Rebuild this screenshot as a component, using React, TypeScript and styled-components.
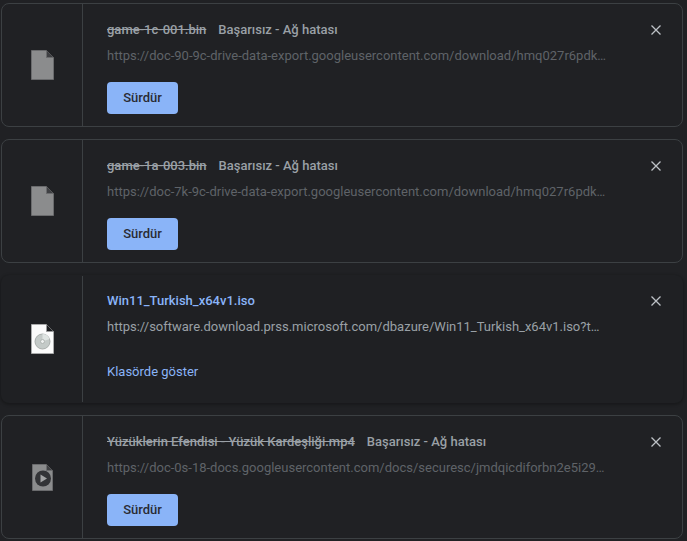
import { FC } from 'react'
import styled, { createGlobalStyle } from 'styled-components'

type IconKind = 'blank' | 'disc' | 'video'

type Download = {
  name: string
  url: string
  status?: string
  failed: boolean
  icon: IconKind
}

const downloads: Download[] = [
  {
    name: 'game-1c-001.bin',
    status: 'Başarısız - Ağ hatası',
    url: 'https://doc-90-9c-drive-data-export.googleusercontent.com/download/hmq027r6pdk9a1b3c5d7e9f0g2h4j6k8',
    failed: true,
    icon: 'blank',
  },
  {
    name: 'game-1a-003.bin',
    status: 'Başarısız - Ağ hatası',
    url: 'https://doc-7k-9c-drive-data-export.googleusercontent.com/download/hmq027r6pdk9a1b3c5d7e9f0g2h4j6k8',
    failed: true,
    icon: 'blank',
  },
  {
    name: 'Win11_Turkish_x64v1.iso',
    url: 'https://software.download.prss.microsoft.com/dbazure/Win11_Turkish_x64v1.iso?tm=a1b3c5d7e9f0g2h4j6k8',
    failed: false,
    icon: 'disc',
  },
  {
    name: 'Yüzüklerin Efendisi - Yüzük Kardeşliği.mp4',
    status: 'Başarısız - Ağ hatası',
    url: 'https://doc-0s-18-docs.googleusercontent.com/docs/securesc/jmdqicdiforbn2e5i29a1b3c5d7e9f0g2h4j6k8',
    failed: true,
    icon: 'video',
  },
]

const BlankIcon: FC = () => (
  <svg width="23" height="30" viewBox="0 0 23 30">
    <path d="M.5.500h15l7 7v22H.5z" fill="#8b8c8d" stroke="#6a6b6d" />
    <path d="M15.500.500v7h7z" fill="#3f4043" />
    <path d="M15.500 1v6.500H22" fill="none" stroke="#6a6b6d" />
  </svg>
)

const DiscIcon: FC = () => (
  <svg width="23" height="30" viewBox="0 0 23 30">
    <path d="M.5.500h15l7 7v22H.5z" fill="#fbfbfb" stroke="#a9aaab" />
    <path d="M15.500.500v7h7z" fill="#202124" />
    <path d="M15.500 1v6.500H22" fill="none" stroke="#9a9b9c" />
    <circle cx="11.500" cy="17.500" r="7.500" fill="#c4cac8" stroke="#a9aeac" />
    <path d="M11.500 10a7.500 7.500 0 0 1 7 5l-7 2.500z" fill="#dfe4e2" />
    <circle cx="11.500" cy="17.500" r="2" fill="#eef0f0" stroke="#b0b5b3" />
  </svg>
)

const VideoIcon: FC = () => (
  <svg width="21" height="27" viewBox="0 0 21 27">
    <path d="M.5.500h14l6 6v20H.5z" fill="#8b8c8d" stroke="#6a6b6d" />
    <path d="M14.500.500v6h6z" fill="#3f4043" />
    <path d="M14.500 1v5.500H20" fill="none" stroke="#6a6b6d" />
    <circle cx="11" cy="14.500" r="8" fill="#333437" />
    <path d="M8.500 10.500l6.500 4-6.500 4z" fill="#a3a4a5" />
  </svg>
)

const fileIcons: Record<IconKind, FC> = {
  blank: BlankIcon,
  disc: DiscIcon,
  video: VideoIcon,
}

const DownloadCard: FC<{ item: Download }> = ({ item }) => {
  const Icon = fileIcons[item.icon]

  return (
    <Card $failed={item.failed}>
      <IconColumn>
        <Icon />
      </IconColumn>
      <Details $failed={item.failed}>
        <TitleRow>
          <FileName $failed={item.failed}>{item.name}</FileName>
          {item.status && <Status>{item.status}</Status>}
        </TitleRow>
        <Url $failed={item.failed}>{item.url}</Url>
        {item.failed ? <ResumeButton>Sürdür</ResumeButton> : <FolderLink>Klasörde göster</FolderLink>}
      </Details>
      <CloseButton aria-label="Kapat" $failed={item.failed}>
        <svg width="10" height="10" viewBox="0 0 10 10">
          <path d="M.5.500l9 9M9.500.500l-9 9" stroke="#bdc1c6" strokeWidth="1.300" />
        </svg>
      </CloseButton>
    </Card>
  )
}

export default function App() {
  return (
    <>
      <GlobalStyle />
      <List>
        {downloads.map((item) => (
          <DownloadCard key={item.name} item={item} />
        ))}
      </List>
    </>
  )
}

const GlobalStyle = createGlobalStyle`
  html, body {
    margin: 0;
    height: 100%;
    overflow: hidden;
    background: #202124;
    font-family: Roboto, "Liberation Sans", sans-serif;
  }
`

const List = styled.div`
  display: flex;
  flex-direction: column;
  gap: 12px;
  width: 682px;
  padding: 3px 0 0 1px;
`

const Card = styled.div<{ $failed: boolean }>`
  position: relative;
  display: flex;
  box-sizing: border-box;
  height: ${({ $failed }) => ($failed ? '124px' : '128px')};
  background: ${({ $failed }) => ($failed ? '#202124' : '#1f2023')};
  border: ${({ $failed }) => ($failed ? '1px solid #3c4043' : '1px solid transparent')};
  border-radius: 8px;
  box-shadow: ${({ $failed }) => ($failed ? 'none' : '0 1px 3px 1px rgba(0, 0, 0, 0.25)')};
`

const IconColumn = styled.div`
  flex: none;
  display: flex;
  align-items: center;
  justify-content: center;
  box-sizing: border-box;
  width: 81px;
  padding-left: 1px;
  border-right: 1px solid #3c4043;
`

const Details = styled.div<{ $failed: boolean }>`
  flex: 1;
  min-width: 0;
  display: flex;
  flex-direction: column;
  align-items: flex-start;
  padding: ${({ $failed }) => ($failed ? '15px' : '14px')} 0 0 24px;
`

const TitleRow = styled.div`
  display: flex;
  align-items: center;
  gap: 12px;
  height: 20px;
  font-size: 13px;
  font-weight: 500;
`

const FileName = styled.span<{ $failed: boolean }>`
  color: ${({ $failed }) => ($failed ? '#9aa0a6' : '#8ab4f8')};
  text-decoration: ${({ $failed }) => ($failed ? 'line-through' : 'none')};
`

const Status = styled.span`
  color: #9aa0a6;
`

const Url = styled.div<{ $failed: boolean }>`
  width: 500px;
  margin-top: 7px;
  overflow: hidden;
  line-height: 20px;
  font-size: 13px;
  white-space: nowrap;
  text-overflow: ellipsis;
  color: ${({ $failed }) => ($failed ? '#5f6368' : '#9aa0a6')};
`

const ResumeButton = styled.button`
  width: 71px;
  height: 32px;
  margin-top: 16px;
  padding: 0 0 2px;
  border: 0;
  border-radius: 4px;
  background: #8ab4f8;
  color: #292b33;
  font-family: inherit;
  font-size: 13px;
  font-weight: 500;
`

const FolderLink = styled.a`
  margin-top: 25px;
  line-height: 20px;
  font-size: 13px;
  font-weight: 400;
  color: #8ab4f8;
`

const CloseButton = styled.button<{ $failed: boolean }>`
  position: absolute;
  top: ${({ $failed }) => ($failed ? '21px' : '20px')};
  right: 21px;
  display: flex;
  padding: 0;
  border: 0;
  background: none;
`
